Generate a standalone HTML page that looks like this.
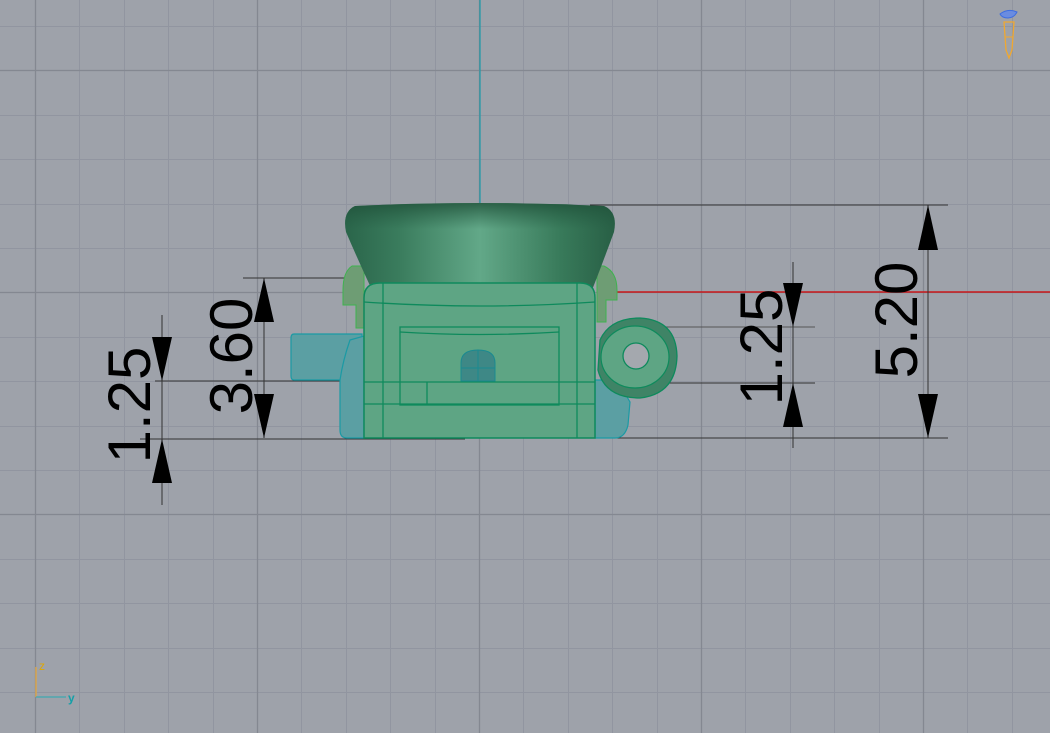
<!DOCTYPE html>
<html><head><meta charset="utf-8"><style>
html,body{margin:0;padding:0;background:#9ea2aa;}
svg{display:block}
text{font-family:"Liberation Sans",sans-serif}
</style></head><body>
<svg width="1050" height="733" viewBox="0 0 1050 733" xmlns="http://www.w3.org/2000/svg">
<defs>
<linearGradient id="bowl" x1="0" x2="1" y1="0" y2="0">
<stop offset="0" stop-color="#2a654a"/><stop offset="0.2" stop-color="#3a7c5d"/>
<stop offset="0.5" stop-color="#62a888"/><stop offset="0.8" stop-color="#387a5a"/>
<stop offset="1" stop-color="#285f45"/>
</linearGradient>
<linearGradient id="bowlv" x1="0" x2="0" y1="0" y2="1">
<stop offset="0" stop-color="#1f5038" stop-opacity="0.8"/><stop offset="0.3" stop-color="#245a42" stop-opacity="0"/>
</linearGradient>
</defs>
<rect width="1050" height="733" fill="#9ea2aa"/>
<g stroke="#9195a0" stroke-width="1">
<line x1="79.5" y1="0" x2="79.5" y2="733"/><line x1="124.5" y1="0" x2="124.5" y2="733"/><line x1="168.5" y1="0" x2="168.5" y2="733"/><line x1="213.5" y1="0" x2="213.5" y2="733"/>
<line x1="301.5" y1="0" x2="301.5" y2="733"/><line x1="346.5" y1="0" x2="346.5" y2="733"/><line x1="390.5" y1="0" x2="390.5" y2="733"/><line x1="435.5" y1="0" x2="435.5" y2="733"/>
<line x1="523.5" y1="0" x2="523.5" y2="733"/><line x1="568.5" y1="0" x2="568.5" y2="733"/><line x1="612.5" y1="0" x2="612.5" y2="733"/><line x1="657.5" y1="0" x2="657.5" y2="733"/>
<line x1="745.5" y1="0" x2="745.5" y2="733"/><line x1="790.5" y1="0" x2="790.5" y2="733"/><line x1="834.5" y1="0" x2="834.5" y2="733"/><line x1="879.5" y1="0" x2="879.5" y2="733"/>
<line x1="967.5" y1="0" x2="967.5" y2="733"/><line x1="1012.5" y1="0" x2="1012.5" y2="733"/>
<line x1="0" y1="26.5" x2="1050" y2="26.5"/><line x1="0" y1="115.5" x2="1050" y2="115.5"/><line x1="0" y1="159.5" x2="1050" y2="159.5"/><line x1="0" y1="204.5" x2="1050" y2="204.5"/><line x1="0" y1="248.5" x2="1050" y2="248.5"/>
<line x1="0" y1="337.5" x2="1050" y2="337.5"/><line x1="0" y1="381.5" x2="1050" y2="381.5"/><line x1="0" y1="426.5" x2="1050" y2="426.5"/><line x1="0" y1="470.5" x2="1050" y2="470.5"/>
<line x1="0" y1="559.5" x2="1050" y2="559.5"/><line x1="0" y1="603.5" x2="1050" y2="603.5"/><line x1="0" y1="648.5" x2="1050" y2="648.5"/><line x1="0" y1="692.5" x2="1050" y2="692.5"/>
</g>
<g stroke="#848891" stroke-width="1.3">
<line x1="35.5" y1="0" x2="35.5" y2="733"/><line x1="257.5" y1="0" x2="257.5" y2="733"/><line x1="479.5" y1="0" x2="479.5" y2="733"/><line x1="701.5" y1="0" x2="701.5" y2="733"/><line x1="923.5" y1="0" x2="923.5" y2="733"/>
<line x1="0" y1="70.5" x2="1050" y2="70.5"/><line x1="0" y1="292.5" x2="1050" y2="292.5"/><line x1="0" y1="514.5" x2="1050" y2="514.5"/>
</g>

<line x1="480" y1="0" x2="480" y2="206" stroke="#1d9aa8" stroke-width="1.2"/>
<line x1="615" y1="292" x2="1050" y2="292" stroke="#c8171b" stroke-width="1.5"/>

<g stroke="#333" stroke-width="1">
<line x1="590" y1="205" x2="948" y2="205"/>
<line x1="600" y1="438" x2="948" y2="438"/>
<line x1="243" y1="278" x2="345" y2="278"/>
<line x1="140" y1="439" x2="465" y2="439"/>
<line x1="155" y1="381" x2="345" y2="381"/>
<line x1="660" y1="327" x2="815" y2="327" stroke="#555"/>
<line x1="660" y1="383" x2="815" y2="383"/>
<line x1="162" y1="315" x2="162" y2="505"/>
<line x1="264" y1="278" x2="264" y2="438"/>
<line x1="793" y1="262" x2="793" y2="448"/>
<line x1="928" y1="205" x2="928" y2="438"/>
</g>
<g fill="#000">
<polygon points="152,337 172,337 162,381"/>
<polygon points="152,483 172,483 162,439"/>
<polygon points="254,322 274,322 264,278"/>
<polygon points="254,394 274,394 264,438"/>
<polygon points="783,283 803,283 793,327"/>
<polygon points="783,427 803,427 793,383"/>
<polygon points="918,250 938,250 928,205"/>
<polygon points="918,394 938,394 928,438"/>
</g>
<g font-size="60" fill="#000" text-anchor="middle">
<text transform="translate(150,405) rotate(-90)">1.25</text>
<text transform="translate(252,356) rotate(-90)">3.60</text>
<text transform="translate(782,347) rotate(-90)">1.25</text>
<text transform="translate(917,320) rotate(-90)">5.20</text>
</g>

<path d="M352 266 Q343 272 343 290 L343 305 L356 305 L356 328 L364 328 L364 266 Z" fill="#6e9d74" stroke="#3fb24f" stroke-width="1"/>
<path d="M604 266 Q617 272 617 290 L617 300 L606 300 L606 322 L597 322 L597 266 Z" fill="#6e9d74" stroke="#3fb24f" stroke-width="1"/>

<path d="M355 206 Q480 200 604 206 Q618 212 614 232 Q600 270 592 290 L372 290 Q358 260 346 232 Q342 212 355 206 Z" fill="url(#bowl)"/>
<path d="M355 206 Q480 200 604 206 Q618 212 614 232 Q600 270 592 290 L372 290 Q358 260 346 232 Q342 212 355 206 Z" fill="url(#bowlv)"/>

<path d="M294 334 L362 334 L362 380 L294 380 Q291 380 291 376 L291 338 Q291 334 294 334 Z" fill="#5b9fa3" stroke="#1b9aa4" stroke-width="1.2"/>
<path d="M350 340 L364 336 L364 438 L347 438 Q340 438 340 430 L340 380 Q343 360 350 340 Z" fill="#5b9fa3" stroke="#1b9aa4" stroke-width="1.2"/>
<path d="M595 380 L617 380 L630 402 L628 425 Q625 438 615 438 L595 438 Z" fill="#5b9fa3" stroke="#1b9aa4" stroke-width="1.2"/>

<path d="M364 438 L364 298 Q364 283 380 283 L580 283 Q595 283 595 298 L595 438 Z" fill="#5ea584" stroke="#0e8a5c" stroke-width="1.5"/>
<g stroke="#0e8a5c" stroke-width="1.3" fill="none">
<line x1="383" y1="283" x2="383" y2="438"/>
<line x1="577" y1="283" x2="577" y2="438"/>
<path d="M364 302 Q480 310 595 302"/>
<rect x="400" y="327" width="159" height="78"/>
<path d="M400 332 Q480 337 559 332"/>
<line x1="364" y1="382" x2="595" y2="382"/>
<line x1="364" y1="404" x2="595" y2="404"/>
<line x1="427" y1="382" x2="427" y2="405"/>
</g>
<path d="M461 381 L461 363 Q461 350 478 350 Q495 350 495 363 L495 381 Z" fill="#3e8886" stroke="#1a8a90" stroke-width="1"/>
<line x1="478" y1="350" x2="478" y2="381" stroke="#1a8a90"/>
<line x1="461" y1="368" x2="495" y2="368" stroke="#1a8a90"/>

<path d="M600 340 Q610 318 640 318 Q676 320 677 356 Q676 394 640 398 Q605 398 598 370 Z" fill="#3f8466" stroke="#0e8a5c" stroke-width="1.3"/>
<ellipse cx="635" cy="357" rx="34" ry="31" fill="#5ea584" stroke="#0e8a5c" stroke-width="1.2"/>
<circle cx="636" cy="356" r="13" fill="#a4a8ae" stroke="#0e8a5c" stroke-width="1.3"/>

<line x1="36" y1="667" x2="36" y2="697" stroke="#d9a64e" stroke-width="1.5"/>
<line x1="36" y1="697" x2="66" y2="697" stroke="#4fa7b0" stroke-width="1.5"/>
<text x="39" y="670" font-size="12" fill="#e0a800">z</text>
<text x="68" y="702" font-size="12" font-weight="bold" fill="#14a0a8">y</text>

<path d="M1000 14 Q1008 8 1017 12 Q1014 18 1008 18 Q1002 18 1000 14 Z" fill="#6a8ce0" stroke="#3d6de0" stroke-width="1"/>
<path d="M1004 22 L1014 22 L1012 50 L1009 58 L1006 50 Z" fill="none" stroke="#f0a830" stroke-width="1.3"/>
<line x1="1005" y1="37" x2="1013" y2="37" stroke="#f0a830"/>
</svg>
</body></html>
